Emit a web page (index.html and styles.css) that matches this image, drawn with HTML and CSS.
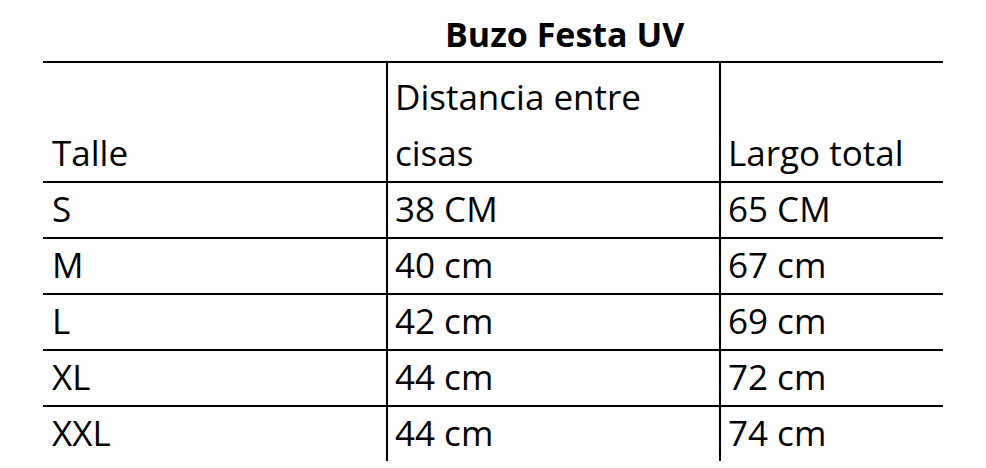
FILE: index.html
```html
<!DOCTYPE html>
<html lang="es">
<head>
<meta charset="utf-8">
<title>Buzo Festa UV</title>
<link rel="stylesheet" href="styles.css">
</head>
<body>
<div class="sheet">
  <div class="title">Buzo Festa UV</div>
  <div class="table">
    <div class="row head">
      <div class="cell">Talle</div>
      <div class="cell">Distancia entre cisas</div>
      <div class="cell">Largo total</div>
    </div>
    <div class="row">
      <div class="cell">S</div>
      <div class="cell">38 CM</div>
      <div class="cell">65 CM</div>
    </div>
    <div class="row">
      <div class="cell">M</div>
      <div class="cell">40 cm</div>
      <div class="cell">67 cm</div>
    </div>
    <div class="row">
      <div class="cell">L</div>
      <div class="cell">42 cm</div>
      <div class="cell">69 cm</div>
    </div>
    <div class="row">
      <div class="cell">XL</div>
      <div class="cell">44 cm</div>
      <div class="cell">72 cm</div>
    </div>
    <div class="row">
      <div class="cell">XXL</div>
      <div class="cell">44 cm</div>
      <div class="cell">74 cm</div>
    </div>
  </div>
</div>
</body>
</html>
```
FILE: styles.css
```css
html, body {
  margin: 0;
  padding: 0;
  background: #fff;
}
body {
  width: 986px;
  height: 468px;
  overflow: hidden;
  font-family: "Open Sans", Lato, "Liberation Sans", sans-serif;
  font-size: 35px;
  color: #000;
}
.sheet {
  padding-left: 43px;
}
.title {
  height: 61px;
  box-sizing: border-box;
  padding-left: 402px;
  padding-top: 14px;
  font-weight: 700;
  font-size: 34px;
  line-height: 40px;
}
.table {
  width: 900px;
}
.row {
  display: grid;
  grid-template-columns: 343px 333px 224px;
  border-top: 2px solid #000;
}
.cell {
  display: flex;
  align-items: flex-end;
  padding-left: 9px;
  padding-bottom: 2px;
  height: 52px;
  line-height: 52px;
}
.row .cell + .cell {
  border-left: 2px solid #000;
  padding-left: 7px;
}
.row.head .cell {
  height: 118px;
  padding-bottom: 0;
  line-height: 56px;
  padding-right: 20px;
}
```
